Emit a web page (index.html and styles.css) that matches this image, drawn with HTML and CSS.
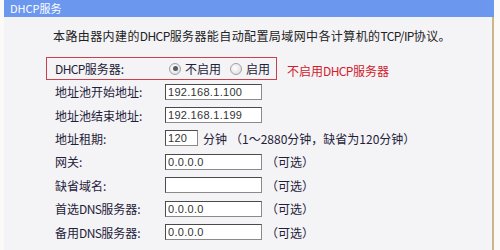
FILE: index.html
```html
<!DOCTYPE html>
<html lang="zh-CN">
<head>
    <meta charset="UTF-8">
    <meta name="viewport" content="width=device-width, initial-scale=1.0">
    <title>DHCP服务</title>
    <link rel="stylesheet" href="styles.css">
</head>
<body>
    <div class="panel">
        <div class="panel-title">DHCP服务</div>
        <div class="panel-body">
            <p class="intro">本路由器内建的<span class="en">DHCP</span>服务器能自动配置局域网中各计算机的<span class="en">TCP/IP</span>协议。</p>

            <div class="switch-line">
                <div class="switch-box">
                    <span class="label"><span class="en">DHCP</span>服务器:</span>
                    <span class="radio checked"></span>
                    <span class="radio-text">不启用</span>
                    <span class="radio"></span>
                    <span class="radio-text">启用</span>
                </div>
                <span class="warn">不启用<span class="en">DHCP</span>服务器</span>
            </div>

            <div class="rows">
                <div class="row">
                    <span class="label">地址池开始地址:</span>
                    <input class="field" type="text" value="192.168.1.100">
                </div>
                <div class="row">
                    <span class="label">地址池结束地址:</span>
                    <input class="field" type="text" value="192.168.1.199">
                </div>
                <div class="row">
                    <span class="label">地址租期:</span>
                    <input class="field short" type="text" value="120">
                    <span class="unit">分钟</span>
                    <span class="hint">（1～2880分钟，缺省为120分钟）</span>
                </div>
                <div class="row">
                    <span class="label">网关:</span>
                    <input class="field" type="text" value="0.0.0.0">
                    <span class="opt">（可选）</span>
                </div>
                <div class="row">
                    <span class="label">缺省域名:</span>
                    <input class="field" type="text" value="">
                    <span class="opt">（可选）</span>
                </div>
                <div class="row">
                    <span class="label">首选<span class="en">DNS</span>服务器:</span>
                    <input class="field" type="text" value="0.0.0.0">
                    <span class="opt">（可选）</span>
                </div>
                <div class="row">
                    <span class="label">备用<span class="en">DNS</span>服务器:</span>
                    <input class="field" type="text" value="0.0.0.0">
                    <span class="opt">（可选）</span>
                </div>
            </div>
        </div>
    </div>
</body>
</html>
```

FILE: styles.css
```css
body {
    margin: 0;
    background-color: #fbfaf8;
    font-family: "Noto Sans CJK SC", "Liberation Sans", sans-serif;
    font-size: 12px;
    color: #1e2238;
}

.panel {
    margin-left: 4px;
    width: 490px;
    height: 250px;
    display: flex;
    flex-direction: column;
}

.panel-title {
    height: 17px;
    line-height: 16px;
    padding-left: 6px;
    background-color: #6b97ef;
    color: #fff;
    font-size: 11px;
}

.panel-title,
.panel-body {
    box-sizing: border-box;
}

.panel-body {
    flex: 1;
    background-color: #f4f3f6;
    border-right: 2px solid #cbb68c;
    padding: 9px 0 0 42px;
}

.en {
    letter-spacing: -0.6px;
}

.intro {
    margin: 0 0 11px 7px;
    line-height: 20px;
    letter-spacing: 0.4px;
    color: #222;
}

.switch-line {
    display: flex;
    align-items: flex-start;
    white-space: nowrap;
}

.switch-box {
    display: flex;
    align-items: center;
    width: 231px;
    height: 23px;
    box-sizing: border-box;
    padding-left: 8px;
    border: 1px solid #c9404f;
}

.label {
    width: 110px;
    flex-shrink: 0;
    white-space: nowrap;
}

.radio {
    flex-shrink: 0;
    width: 10px;
    height: 10px;
    margin: 0 4px;
    border: 1px solid #a2a2a2;
    border-radius: 50%;
    background: radial-gradient(circle at 40% 40%, #fff, #d8d8d8);
    position: relative;
}

.radio.checked::after {
    content: "";
    position: absolute;
    left: 2.5px;
    top: 2.5px;
    width: 5px;
    height: 5px;
    border-radius: 50%;
    background-color: #555a66;
}

.radio-text {
    flex-shrink: 0;
    margin-right: 5px;
}

.warn {
    margin: 5px 0 0 10px;
    color: #d0202c;
}

.rows {
    padding-left: 9px;
}

.row {
    display: flex;
    align-items: center;
    height: 23.4px;
    white-space: nowrap;
}

.field {
    flex-shrink: 0;
    width: 97px;
    height: 16px;
    box-sizing: border-box;
    margin: 0;
    padding: 0 2px;
    border: 1px solid #8a8a8a;
    border-top-color: #4a4a4a;
    border-left-color: #4a4a4a;
    background-color: #fff;
    font-family: "Liberation Sans", sans-serif;
    font-size: 11px;
    letter-spacing: 0.3px;
    color: #333;
}

.field.short {
    width: 33px;
}

.unit {
    margin-left: 5px;
}

.hint {
    margin-left: 3px;
}

.opt {
    margin-left: 4px;
}
```
